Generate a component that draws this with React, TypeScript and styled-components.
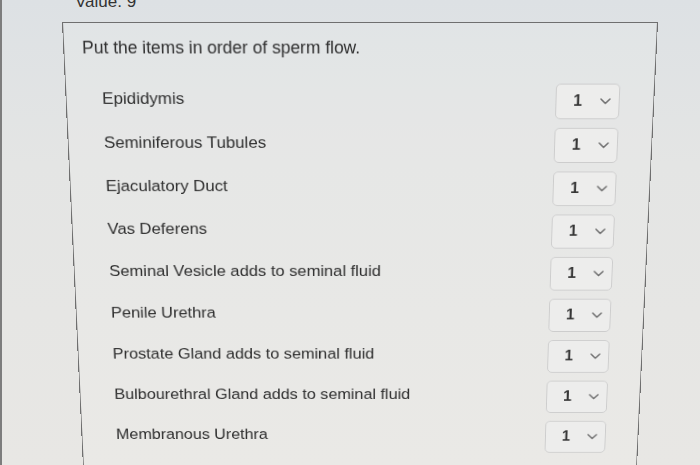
import styled, { createGlobalStyle } from "styled-components"

const items = [
  "Epididymis",
  "Seminiferous Tubules",
  "Ejaculatory Duct",
  "Vas Deferens",
  "Seminal Vesicle adds to seminal fluid",
  "Penile Urethra",
  "Prostate Gland adds to seminal fluid",
  "Bulbourethral Gland adds to seminal fluid",
  "Membranous Urethra",
]

const GlobalStyle = createGlobalStyle`
  html, body {
    margin: 0;
    height: 100%;
    overflow: hidden;
  }
  body {
    font-family: "Liberation Sans", Arial, sans-serif;
    background: linear-gradient(180deg, #dde1e4 0%, #e4e5e4 35%, #e8e7e4 100%);
    color: #2e2e2e;
  }
`

const Screen = styled.div`
  height: 465px;
  box-sizing: border-box;
  border-left: 2px solid #7d7d7d;
  padding-left: 60px;
  overflow: hidden;
`

const Caption = styled.div`
  margin-top: -8px;
  height: 30px;
  padding-left: 13px;
  font-size: 17px;
  line-height: 20px;
  color: #333;
`

const Panel = styled.section`
  width: 596px;
  height: 560px;
  box-sizing: border-box;
  border: 1px solid #6f6f6f;
  background: rgba(255, 255, 255, 0.1);
  padding-top: 15px;
  transform-origin: 50% 0;
  transform: perspective(1000px) rotateX(-9deg);
`

const Title = styled.p`
  margin: 0;
  padding-left: 18px;
  font-size: 17.5px;
  line-height: 20px;
`

const List = styled.ol`
  list-style: none;
  margin: 19px 0 0;
  padding: 0;
`

const Row = styled.li`
  height: 46px;
  display: flex;
  align-items: center;
  justify-content: space-between;
  padding: 0 34px 0 36px;
  font-size: 17.2px;
  line-height: 20px;
`

const Select = styled.div`
  width: 65px;
  height: 37px;
  margin-top: 6px;
  box-sizing: border-box;
  display: flex;
  align-items: center;
  justify-content: space-between;
  padding: 0 8px 0 17px;
  border: 1px solid #cdcdcd;
  border-radius: 5px;
  background: #ededec;
  font-size: 16px;
  font-weight: 700;
  color: #353535;
`

const Chevron = () => (
  <svg width="11" height="7" viewBox="0 0 11 7">
    <polyline points="1,1 5.5,5.5 10,1" fill="none" stroke="#707070" strokeWidth="1.6" strokeLinecap="round" strokeLinejoin="round" />
  </svg>
)

export default function App() {
  return (
    <Screen>
      <GlobalStyle />
      <Caption>Value: 9</Caption>
      <Panel>
        <Title>Put the items in order of sperm flow.</Title>
        <List>
          {items.map((item) => (
            <Row key={item}>
              <span>{item}</span>
              <Select>
                <span>1</span>
                <Chevron />
              </Select>
            </Row>
          ))}
        </List>
      </Panel>
    </Screen>
  )
}
